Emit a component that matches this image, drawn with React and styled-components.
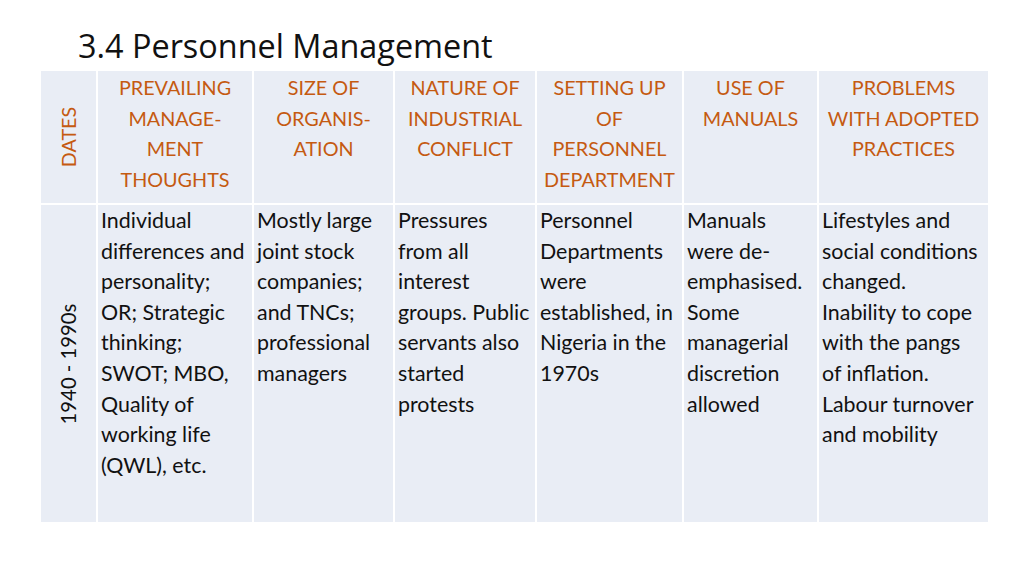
import React from "react";
import styled, { createGlobalStyle } from "styled-components";

const Global = createGlobalStyle`
  html, body { margin: 0; padding: 0; background: #fff; }
  body { width: 1024px; height: 575px; overflow: hidden; }
`;

const Slide = styled.div`
  width: 1024px;
  height: 575px;
  box-sizing: border-box;
  padding: 24px 36px 0 41px;
  display: flex;
  flex-direction: column;
`;

const Title = styled.h1`
  margin: 0 0 0 37px;
  height: 47px;
  font-family: "Open Sans", "Noto Sans", sans-serif;
  font-weight: 400;
  font-size: 32.4px;
  line-height: 42px;
  color: #111;
`;

const Grid = styled.div`
  display: grid;
  width: 947px;
  grid-template-columns: 55px 154px 139px 140px 145px 133px 169px;
  grid-template-rows: 132px 317px;
  column-gap: 2px;
  row-gap: 2px;
  background: #ffffff;
`;

const Cell = styled.div`
  background: #e9edf5;
  box-sizing: border-box;
  padding: ${(p) => (p.$head ? "1px 2px 0" : "0 2px 0 3px")};
  font-family: Lato, "Open Sans", sans-serif;
  font-size: ${(p) => (p.$head ? "19.8px" : "21.4px")};
  line-height: 30.6px;
  color: ${(p) => (p.$head ? "#c55a11" : "#111")};
  text-align: ${(p) => (p.$head ? "center" : "left")};
  white-space: nowrap;
`;

const SideCell = styled.div`
  background: #e9edf5;
  display: flex;
  align-items: center;
  justify-content: center;
  overflow: hidden;
`;

const Vertical = styled.span`
  display: block;
  transform: rotate(-90deg);
  white-space: nowrap;
  font-family: Lato, "Open Sans", sans-serif;
  font-size: ${(p) => (p.$head ? "19.8px" : "20.3px")};
  line-height: 24px;
  color: ${(p) => (p.$head ? "#c55a11" : "#111")};
`;

const headers = [
  ["PREVAILING", "MANAGE-", "MENT", "THOUGHTS"],
  ["SIZE OF", "ORGANIS-", "ATION"],
  ["NATURE OF", "INDUSTRIAL", "CONFLICT"],
  ["SETTING UP", "OF", "PERSONNEL", "DEPARTMENT"],
  ["USE OF", "MANUALS"],
  ["PROBLEMS", "WITH ADOPTED", "PRACTICES"],
];

const body = [
  ["Individual", "differences and", "personality;", "OR; Strategic", "thinking;", "SWOT; MBO,", "Quality of", "working life", "(QWL), etc."],
  ["Mostly large", "joint stock", "companies;", "and TNCs;", "professional", "managers"],
  ["Pressures", "from all", "interest", "groups. Public", "servants also", "started", "protests"],
  ["Personnel", "Departments", "were", "established, in", "Nigeria in the", "1970s"],
  ["Manuals", "were de-", "emphasised.", "Some", "managerial", "discretion", "allowed"],
  ["Lifestyles and", "social conditions", "changed.", "Inability to cope", "with the pangs", "of inflation.", "Labour turnover", "and mobility"],
];

const Lines = ({ lines }) =>
  lines.map((l, i) => (
    <React.Fragment key={i}>
      {l}
      {i < lines.length - 1 && <br />}
    </React.Fragment>
  ));

export default function App() {
  return (
    <>
      <Global />
      <Slide>
        <Title>3.4 Personnel Management</Title>
        <Grid>
          <SideCell>
            <Vertical $head>DATES</Vertical>
          </SideCell>
          {headers.map((h, i) => (
            <Cell key={"h" + i} $head>
              <Lines lines={h} />
            </Cell>
          ))}
          <SideCell>
            <Vertical>1940 - 1990s</Vertical>
          </SideCell>
          {body.map((b, i) => (
            <Cell key={"b" + i}>
              <Lines lines={b} />
            </Cell>
          ))}
        </Grid>
      </Slide>
    </>
  );
}
